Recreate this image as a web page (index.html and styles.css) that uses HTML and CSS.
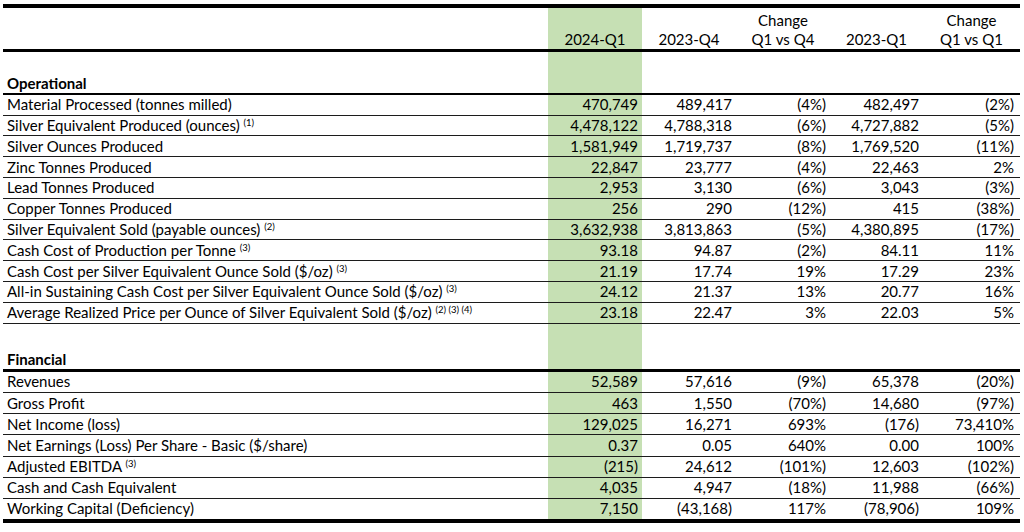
FILE: index.html
```html
<!DOCTYPE html>
<html lang="en">
<head>
    <meta charset="UTF-8">
    <meta name="viewport" content="width=device-width, initial-scale=1.0">
    <title>Quarterly Highlights</title>
    <link rel="stylesheet" href="styles.css">
</head>
<body>
    <table class="summary">
        <colgroup>
            <col class="col-label">
            <col class="col-num">
            <col class="col-num">
            <col class="col-num">
            <col class="col-num2">
            <col class="col-last">
        </colgroup>
        <thead>
            <tr class="head-row">
                <th></th>
                <th class="current">2024-Q1</th>
                <th>2023-Q4</th>
                <th>Change<br>Q1 vs Q4</th>
                <th>2023-Q1</th>
                <th>Change<br>Q1 vs Q1</th>
            </tr>
        </thead>
        <tbody class="ops">
            <tr class="spacer"><td></td><td class="current"></td><td></td><td></td><td></td><td></td></tr>
            <tr class="section sec-ops">
                <td>Operational</td><td class="current"></td><td></td><td></td><td></td><td></td>
            </tr>
            <tr>
                <td>Material Processed (tonnes milled)</td>
                <td class="current">470,749</td><td>489,417</td><td>(4%)</td><td>482,497</td><td>(2%)</td>
            </tr>
            <tr>
                <td>Silver Equivalent Produced (ounces) <sup>(1)</sup></td>
                <td class="current">4,478,122</td><td>4,788,318</td><td>(6%)</td><td>4,727,882</td><td>(5%)</td>
            </tr>
            <tr>
                <td>Silver Ounces Produced</td>
                <td class="current">1,581,949</td><td>1,719,737</td><td>(8%)</td><td>1,769,520</td><td>(11%)</td>
            </tr>
            <tr>
                <td>Zinc Tonnes Produced</td>
                <td class="current">22,847</td><td>23,777</td><td>(4%)</td><td>22,463</td><td>2%</td>
            </tr>
            <tr>
                <td>Lead Tonnes Produced</td>
                <td class="current">2,953</td><td>3,130</td><td>(6%)</td><td>3,043</td><td>(3%)</td>
            </tr>
            <tr>
                <td>Copper Tonnes Produced</td>
                <td class="current">256</td><td>290</td><td>(12%)</td><td>415</td><td>(38%)</td>
            </tr>
            <tr>
                <td>Silver Equivalent Sold (payable ounces) <sup>(2)</sup></td>
                <td class="current">3,632,938</td><td>3,813,863</td><td>(5%)</td><td>4,380,895</td><td>(17%)</td>
            </tr>
            <tr>
                <td>Cash Cost of Production per Tonne <sup>(3)</sup></td>
                <td class="current">93.18</td><td>94.87</td><td>(2%)</td><td>84.11</td><td>11%</td>
            </tr>
            <tr>
                <td>Cash Cost per Silver Equivalent Ounce Sold ($/oz) <sup>(3)</sup></td>
                <td class="current">21.19</td><td>17.74</td><td>19%</td><td>17.29</td><td>23%</td>
            </tr>
            <tr>
                <td>All-in Sustaining Cash Cost per Silver Equivalent Ounce Sold ($/oz) <sup>(3)</sup></td>
                <td class="current">24.12</td><td>21.37</td><td>13%</td><td>20.77</td><td>16%</td>
            </tr>
            <tr>
                <td>Average Realized Price per Ounce of Silver Equivalent Sold ($/oz) <sup>(2) (3) (4)</sup></td>
                <td class="current">23.18</td><td>22.47</td><td>3%</td><td>22.03</td><td>5%</td>
            </tr>
        </tbody>
        <tbody class="fin">
            <tr class="spacer tall"><td></td><td class="current"></td><td></td><td></td><td></td><td></td></tr>
            <tr class="section sec-fin">
                <td>Financial</td><td class="current"></td><td></td><td></td><td></td><td></td>
            </tr>
            <tr>
                <td>Revenues</td>
                <td class="current">52,589</td><td>57,616</td><td>(9%)</td><td>65,378</td><td>(20%)</td>
            </tr>
            <tr>
                <td>Gross Profit</td>
                <td class="current">463</td><td>1,550</td><td>(70%)</td><td>14,680</td><td>(97%)</td>
            </tr>
            <tr>
                <td>Net Income (loss)</td>
                <td class="current">129,025</td><td>16,271</td><td>693%</td><td>(176)</td><td>73,410%</td>
            </tr>
            <tr>
                <td>Net Earnings (Loss) Per Share - Basic ($/share)</td>
                <td class="current">0.37</td><td>0.05</td><td>640%</td><td>0.00</td><td>100%</td>
            </tr>
            <tr>
                <td>Adjusted EBITDA <sup>(3)</sup></td>
                <td class="current">(215)</td><td>24,612</td><td>(101%)</td><td>12,603</td><td>(102%)</td>
            </tr>
            <tr>
                <td>Cash and Cash Equivalent</td>
                <td class="current">4,035</td><td>4,947</td><td>(18%)</td><td>11,988</td><td>(66%)</td>
            </tr>
            <tr class="last">
                <td>Working Capital (Deficiency)</td>
                <td class="current">7,150</td><td>(43,168)</td><td>117%</td><td>(78,906)</td><td>109%</td>
            </tr>
        </tbody>
    </table>
</body>
</html>
```

FILE: styles.css
```css
body {
    margin: 0;
    padding: 4px 4px 0 3px;
    background: #fff;
    font-family: Lato, "Open Sans", sans-serif;
    font-size: 15px;
    color: #000;
}
.summary {
    width: 1017px;
    border-collapse: collapse;
    table-layout: fixed;
    border-top: 4px solid #000;
    border-bottom: 4px solid #000;
}
.col-label { width: 545px; }
.col-num { width: 94px; }
.col-num2 { width: 93px; }
.col-last { width: 97px; }

th {
    font-weight: normal;
    text-align: center;
    vertical-align: bottom;
    line-height: 19px;
    height: 41px;
    padding: 0;
    border-bottom: 3px solid #000;
}
td {
    height: 19.8px;
    padding: 0 4px;
    line-height: 19px;
    text-align: right;
    white-space: nowrap;
    border-bottom: 1px solid #1c1c1c;
}
td:first-child {
    text-align: left;
}
td:last-child {
    padding-right: 6px;
}
.current {
    background: #c6e0b4;
}
sup {
    font-size: 9.5px;
    line-height: 0;
    vertical-align: 5px;
}

.spacer td {
    height: 21px;
    border-bottom: none;
}
.spacer.tall td {
    height: 25px;
}
.section td {
    font-weight: bold;
    vertical-align: bottom;
}
.sec-ops td {
    border-bottom: 2px solid #000;
}
.sec-fin td {
    border-bottom: 3px solid #000;
}
.fin td {
    height: 20.2px;
}
.fin .last td {
    border-bottom: none;
}
```
